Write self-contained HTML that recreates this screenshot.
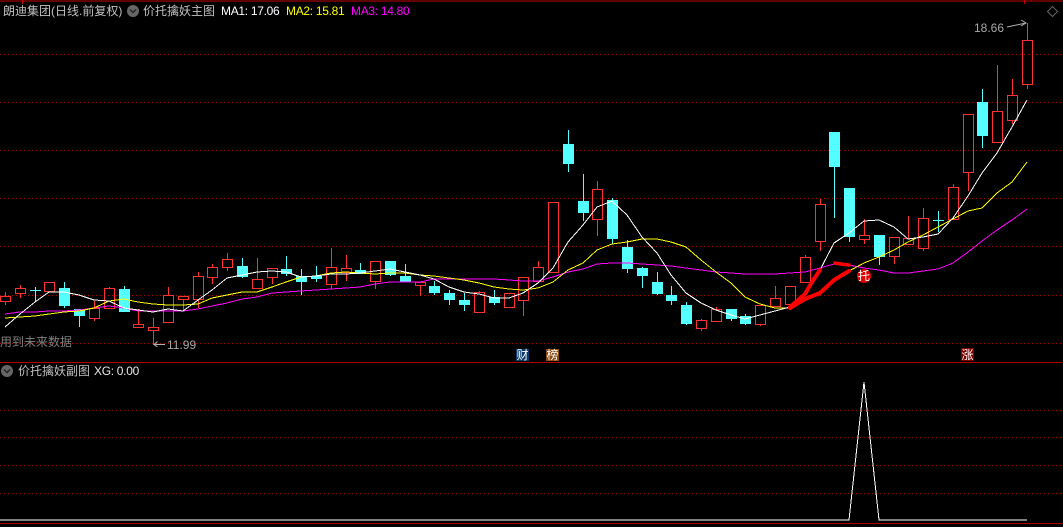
<!DOCTYPE html>
<html><head><meta charset="utf-8"><style>
html,body{margin:0;padding:0;background:#000;width:1063px;height:527px;overflow:hidden}
svg{position:absolute;left:0;top:0}
.t{position:absolute;white-space:nowrap;font:12px/14px "Liberation Sans","WenQuanYi Zen Hei","Noto Sans CJK SC",sans-serif;color:#c0c0c0}
.n{letter-spacing:-.3px}
</style></head><body>
<svg width="1063" height="527" viewBox="0 0 1063 527" xmlns="http://www.w3.org/2000/svg">
<g fill="none" stroke="#a80000" stroke-dasharray="1 3" shape-rendering="crispEdges">
<path d="M0 54.5H1063M0 102.5H1063M0 150.5H1063M0 198.5H1063M0 246.5H1063M0 295.5H1063M0 343.5H1063M0 410.5H1063M0 437.5H1063M0 465.5H1063M0 493.5H1063"/>
</g>
<path d="M0 1H1063M22.5 0V4M1024.5 0V4" stroke="#c00000" fill="none" shape-rendering="crispEdges"/>
<path d="M0 362.5H1063M0 523.5H1063" stroke="#b00000" fill="none" shape-rendering="crispEdges"/>
<g fill="none" stroke="#ff3232" shape-rendering="crispEdges">
<path d="M0.5 296.5h10v5h-10zM5.5 292V296M5.5 301V305"/>
<path d="M15.5 288.5h10v5h-10zM20.5 285V288M20.5 293V298"/>
<path d="M44.5 282.5h10v9h-10z"/>
<path d="M89.5 308.5h10v10h-10zM94.5 301V308M94.5 318V321"/>
<path d="M104.5 288.5h10v20h-10zM109.5 287V288"/>
<path d="M133.5 324.5h10v3h-10zM138.5 309V324"/>
<path d="M148.5 327.5h10v3h-10zM153.5 318V327M153.5 330V345"/>
<path d="M163.5 295.5h10v27h-10zM168.5 287V295"/>
<path d="M178.5 296.5h10v3h-10zM183.5 299V311"/>
<path d="M193.5 276.5h10v23h-10zM198.5 272V276M198.5 299V308"/>
<path d="M207.5 267.5h10v10h-10zM212.5 264V267M212.5 277V284"/>
<path d="M222.5 259.5h10v8h-10zM227.5 253V259M227.5 267V271"/>
<path d="M252.5 279.5h10v9h-10zM257.5 258V279"/>
<path d="M267.5 268.5h10v9h-10zM272.5 277V284"/>
<path d="M326.5 267.5h10v17h-10zM331.5 248V267M331.5 284V289"/>
<path d="M341.5 268.5h10v4h-10zM346.5 255V268M346.5 272V281"/>
<path d="M370.5 261.5h10v20h-10zM375.5 281V289"/>
<path d="M415.5 282.5h10v3h-10zM420.5 285V296"/>
<path d="M474.5 292.5h10v20h-10zM479.5 291V292"/>
<path d="M504.5 293.5h10v14h-10z"/>
<path d="M518.5 277.5h10v23h-10zM523.5 300V316"/>
<path d="M533.5 267.5h10v14h-10zM538.5 261V267"/>
<path d="M548.5 202.5h10v70h-10z"/>
<path d="M592.5 189.5h10v30h-10zM597.5 181V189M597.5 219V236"/>
<path d="M696.5 320.5h10v8h-10zM701.5 319V320M701.5 328V331"/>
<path d="M711.5 309.5h10v12h-10zM716.5 307V309"/>
<path d="M755.5 305.5h10v19h-10zM760.5 324V326"/>
<path d="M770.5 298.5h10v8h-10zM775.5 286V298"/>
<path d="M785.5 286.5h10v18h-10z"/>
<path d="M800.5 257.5h10v25h-10zM805.5 255V257"/>
<path d="M815.5 204.5h10v37h-10zM820.5 199V204M820.5 241V251"/>
<path d="M859.5 235.5h10v4h-10zM864.5 219V235M864.5 239V244"/>
<path d="M889.5 237.5h10v19h-10zM894.5 256V264"/>
<path d="M903.5 238.5h10v6h-10zM908.5 216V238"/>
<path d="M918.5 218.5h10v30h-10zM923.5 208V218M923.5 248V251"/>
<path d="M948.5 187.5h10v32h-10zM953.5 184V187"/>
<path d="M963.5 114.5h10v58h-10zM968.5 172V191"/>
<path d="M992.5 111.5h10v31h-10zM997.5 65V111"/>
<path d="M1007.5 95.5h10v25h-10zM1012.5 79V95M1012.5 120V124"/>
<path d="M1022.5 40.5h10v44h-10zM1027.5 23V40M1027.5 84V89"/>
</g>
<g fill="#54ffff" shape-rendering="crispEdges">
<path d="M59 288h11v18h-11zM64 282h1v26h-1z"/>
<path d="M74 309h11v7h-11zM79 309h1v18h-1z"/>
<path d="M119 289h11v23h-11zM124 286h1v26h-1z"/>
<path d="M237 266h11v11h-11zM242 258h1v20h-1z"/>
<path d="M281 269h11v5h-11zM286 256h1v20h-1z"/>
<path d="M296 276h11v6h-11zM301 269h1v26h-1z"/>
<path d="M311 276h11v3h-11zM316 266h1v16h-1z"/>
<path d="M355 270h11v4h-11zM360 263h1v11h-1z"/>
<path d="M385 261h11v14h-11zM390 261h1v15h-1z"/>
<path d="M400 276h11v6h-11zM405 264h1v18h-1z"/>
<path d="M429 286h11v7h-11zM434 281h1v14h-1z"/>
<path d="M444 293h11v7h-11zM449 290h1v15h-1z"/>
<path d="M459 300h11v5h-11zM464 293h1v18h-1z"/>
<path d="M489 297h11v6h-11zM494 290h1v15h-1z"/>
<path d="M563 144h11v20h-11zM568 130h1v42h-1z"/>
<path d="M578 201h11v12h-11zM583 174h1v47h-1z"/>
<path d="M607 200h11v39h-11zM612 198h1v46h-1z"/>
<path d="M622 247h11v22h-11zM627 240h1v33h-1z"/>
<path d="M637 268h11v8h-11zM642 267h1v21h-1z"/>
<path d="M652 282h11v12h-11zM657 272h1v23h-1z"/>
<path d="M666 295h11v6h-11zM671 286h1v19h-1z"/>
<path d="M681 305h11v19h-11zM686 302h1v23h-1z"/>
<path d="M726 309h11v10h-11zM731 309h1v12h-1z"/>
<path d="M740 316h11v8h-11zM745 314h1v11h-1z"/>
<path d="M829 132h11v35h-11zM834 132h1v86h-1z"/>
<path d="M844 188h11v49h-11zM849 188h1v54h-1z"/>
<path d="M874 235h11v22h-11zM879 235h1v30h-1z"/>
<path d="M977 102h11v34h-11zM982 89h1v59h-1z"/>
<path d="M30 290h11v1h-11zM35 287h1v15h-1z"/>
<path d="M933 220h11v1h-11zM938 211h1v21h-1z"/>
</g>
<g fill="none" shape-rendering="crispEdges">
<polyline stroke="#ff00ff" points="5,314 20,312 35,312 49,311 64,311 79,310 94,308 109,306 124,308 138,311 153,311 168,311 183,311 198,309 212,306 227,303 242,299 257,297 272,293 286,292 301,291 316,290 331,289 346,288 360,287 375,284 390,282 405,282 420,282 434,279 449,279 464,279 479,279 494,279 509,280 523,281 538,281 553,277 568,272 583,269 597,264 612,263 627,263 642,264 657,265 671,266 686,268 701,270 716,272 731,273 745,274 760,274 775,274 790,273 805,272 820,268 834,264 849,265 864,268 879,270 894,273 908,273 923,271 938,269 953,263 968,252 982,241 997,230 1012,220 1027,209"/>
<polyline stroke="#ffff00" points="5,318 20,317 35,316 49,314 64,312 79,311 94,308 109,301 124,299 138,302 153,304 168,305 183,305 198,304 212,298 227,295 242,292 257,292 272,287 286,282 301,277 316,276 331,273 346,272 360,273 375,274 390,273 405,273 420,275 434,276 449,278 464,280 479,283 494,287 509,289 523,290 538,288 553,282 568,270 583,263 597,250 612,244 627,242 642,239 657,239 671,242 686,247 701,260 716,272 731,283 745,297 760,304 775,308 790,308"/>
<polyline stroke="#ffff00" points="849,271 864,263 879,257 894,250 908,242 923,235 938,227 953,219 968,211 982,208 997,193 1012,182 1027,162"/>
<polyline stroke="#ffffff" points="5,327 20,314 35,302 49,292 64,292 79,295 94,300 109,301 124,308 138,310 153,312 168,309 183,311 198,300 212,290 227,278 242,275 257,272 272,271 286,272 301,277 316,276 331,274 346,274 360,273 375,271 390,269 405,272 420,275 434,279 449,287 464,292 479,294 494,298 509,298 523,293 538,283 553,268 568,242 583,225 597,207 612,201 627,215 642,237 657,253 671,275 686,293 701,303 716,310 731,315 745,319 760,315 775,311 790,307"/>
<polyline stroke="#ffffff" points="820,270 834,243 849,233 864,221 879,220 894,227 908,239 923,237 938,234 953,218 968,196 982,173 997,153 1012,127 1027,100"/>
<polyline stroke="#ffffff" points="0,520 849,520 864,382 879,520 1027,520"/>
</g>
<g fill="none" stroke="#ff0000" stroke-width="4" stroke-linecap="round" stroke-linejoin="round">
<polyline points="790,307 805,294 812,282 820,270"/>
<polyline points="790,308 805,299 820,293 834,280 849,271"/>
<polyline stroke-width="3.5" points="835,263 841,264 849,265"/>
</g>
<circle cx="864" cy="276" r="7" fill="#e00000"/>
<circle cx="133" cy="11" r="6" fill="#666"/>
<path d="M130 9.5l3 3 3-3" fill="none" stroke="#222" stroke-width="1.4"/>
<circle cx="7" cy="371" r="6" fill="#666"/>
<path d="M4 369.5l3 3 3-3" fill="none" stroke="#222" stroke-width="1.4"/>
<path d="M1052.5 6.5l5 5-5 5-5-5z" fill="none" stroke="#666"/>
<path d="M165 344.5H154M157.5 341.5L154 344.5L157.5 347" fill="none" stroke="#b0b0b0"/>
<path d="M1007 27L1026 23M1021 20L1026 23L1021 26" fill="none" stroke="#b0b0b0"/>
<rect x="516" y="349" width="13" height="12" fill="#0a3a6a"/>
<rect x="546" y="349" width="13" height="12" fill="#8a4a10"/>
<rect x="961" y="348" width="13" height="13" fill="#800000"/>
</svg>
<div class="t" style="left:3px;top:4px">朗迪集团(日线.前复权)</div>
<div class="t" style="left:143px;top:4px">价托擒妖主图</div>
<div class="t n" style="left:221px;top:4px;color:#fff">MA1: 17.06</div>
<div class="t n" style="left:286px;top:4px;color:#ff0">MA2: 15.81</div>
<div class="t n" style="left:351px;top:4px;color:#f0f">MA3: 14.80</div>
<div class="t" style="left:0;top:335px;color:#808080">用到未来数据</div>
<div class="t" style="left:167px;top:338px;color:#a8a8a8">11.99</div>
<div class="t" style="left:974px;top:21px;color:#a8a8a8">18.66</div>
<div class="t" style="left:18px;top:364px">价托擒妖副图</div>
<div class="t n" style="left:94px;top:364px;color:#e8e8e8">XG: 0.00</div>
<div class="t" style="left:516px;top:348px;width:13px;text-align:center;color:#fff">财</div>
<div class="t" style="left:546px;top:348px;width:13px;text-align:center;color:#fff">榜</div>
<div class="t" style="left:961px;top:348px;width:13px;text-align:center;color:#fff">涨</div>
<div class="t" style="left:858px;top:269px;width:12px;text-align:center;color:#fff">托</div>
</body></html>
